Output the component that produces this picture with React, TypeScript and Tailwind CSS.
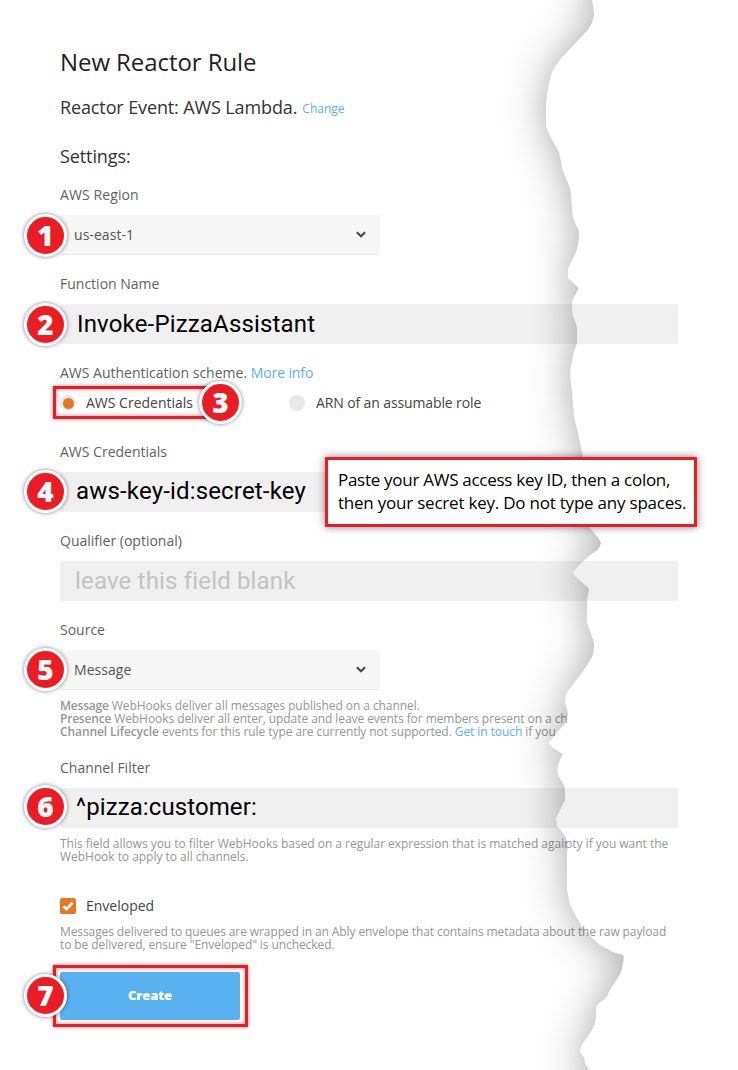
import type { ReactNode } from 'react';

const EDGE =
  'M592 0 C593 6 594 10 594 15 L592 23 C590 27 588 30 585 33 L567 52 C564 55 561 58 559 61 C556 66 553 69 551 75 L548 88 L546 103 L546 127 C548 131 549 134 550.5 137 L559 152 C560 157 561 162 562 167 C564 175 568 182 570.5 190 L573 218 L576.5 226 C578 229 579 231 579 233 L578.7 240 C578 245 577 249 576 252 L568 269 L568 278 L578.7 288 C577 293 573 297 572 303 L572 312 C573 318 576 322 577 328 L577 343 C575 349 573 353 572.7 358 C571 366 570 372 570.3 377 L572.7 400 L574 417 L578 433 L583 457 L589 527 L599 539 L601 543 L599 548 C597 551 593 553 590 555 L580 564 L573 572 C574 575 575 577 577 578 L585 585 C587 587 589 588 589 590 L587 600 L587 622 C588 627 591 632 592 637 C594 641 594 643 594 646 C594 650 593 654 592 657 C589 662 586 667 583 671 L571 687 C568 691 566 693 565.5 697 C565 701 565 704 566 707 C567 710 568 712 568 715 L565 723 L555 735 L549 743 C550 745 551 746 553 748 L562.5 754 L559 762 C558 765 557 769 557.5 772 C558 777 563 782 565 788 L565 800 L556 818 L557 826 L563 833 C565 836 567 839 567 842 L567 888 C567.5 895 569 901 571 907 C574 913 577 918 580 923 C582 927 584 930 587 933 C591 937 595 941 600 945 L613 952 L623.7 955.5 C623.7 961 622.5 967 621 972 C619 976 617 979 615 982 C612 987 609 991 607 996 C604 1000 600 1002 597 1005 L596 1009 L596 1018 C595 1022 594 1025 593 1028 C590 1034 584 1040 581 1047 L580 1052 L584 1057 L585 1063 L589 1070';

function TornEdge() {
  return (
    <svg className="pointer-events-none absolute left-0 top-0" width="738" height="1070" viewBox="0 0 738 1070" aria-hidden="true">
      <defs>
        <clipPath id="sheet">
          <path d={EDGE + ' L0 1070 L0 0 Z'} />
        </clipPath>
        <filter id="soft" filterUnits="userSpaceOnUse" x="300" y="-100" width="640" height="1270" colorInterpolationFilters="sRGB">
          <feGaussianBlur stdDeviation="20" />
        </filter>
      </defs>
      <g clipPath="url(#sheet)">
        <path d={EDGE + ' L585 1170 L940 1170 L940 -100 L588 -100 Z'} fill="#000" fillOpacity="0.34" filter="url(#soft)" />
      </g>
    </svg>
  );
}

function Badge({ n, className = '-left-9 -top-px' }: { n: number; className?: string }) {
  return (
    <span
      className={`absolute z-20 flex size-[43px] items-center justify-center rounded-full border-[3px] border-white bg-[#ed1c24] pb-0.5 font-['Open_Sans',sans-serif] text-[28px] font-extrabold leading-none tracking-normal text-white shadow-[0_0_4px_rgba(0,0,0,0.5)] ${className}`}
    >
      {n}
    </span>
  );
}

function Label({ children, className = 'mt-[19px]' }: { children: ReactNode; className?: string }) {
  return <div className={`h-5 whitespace-nowrap text-sm leading-5 text-[#626262] ${className}`}>{children}</div>;
}

function Select({ value, n, badge }: { value: string; n: number; badge: string }) {
  return (
    <div className="relative mt-2.5 flex h-10 w-80 items-center justify-between rounded-[3px] border-b border-[#e6e6e6] bg-[#f7f7f7] pl-3.5 pr-3.5 text-sm text-[#555]">
      <Badge n={n} className={badge} />
      <span className="pt-px tracking-[0.05px]">{value}</span>
      <svg width="10" height="7" viewBox="0 0 10 7" fill="none" stroke="#4a4a4a" strokeWidth="2.2" aria-hidden="true">
        <path d="M0.9 1.2 L5 5.2 L9.1 1.2" />
      </svg>
    </div>
  );
}

function Field({ children, className }: { children: ReactNode; className: string }) {
  return (
    <div
      className={`relative mt-2.5 h-10 w-[618px] whitespace-nowrap rounded-[2px] bg-[#f0f0f0] font-['Roboto',sans-serif] text-[24px] leading-10 ${className}`}
    >
      {children}
    </div>
  );
}

export default function App() {
  return (
    <main className="relative h-[1070px] w-[738px] overflow-hidden bg-white pl-[60px] pt-[46px] font-['Open_Sans',sans-serif]">
      <h1 className="h-8 text-2xl leading-8 tracking-[-0.07px] text-[#222]">New Reactor Rule</h1>
      <div className="mt-[17px] flex h-6 whitespace-nowrap text-lg leading-6 text-[#333]">
        <span className="tracking-[-0.12px]">Reactor Event: AWS Lambda.</span>
        <a className="ml-[5px] pt-0.5 text-xs font-medium leading-6 text-[#5ab1ef]">Change</a>
      </div>
      <h2 className="mt-[25px] h-6 text-lg leading-6 tracking-[-0.1px] text-[#333]">Settings:</h2>

      <Label className="mt-[17px] tracking-[0.1px]">AWS Region</Label>
      <Select value="us-east-1" n={1} badge="-left-9 -top-px" />

      <Label>Function Name</Label>
      <Field className="pl-[17px] tracking-[0.17px] text-black">
        <Badge n={2} />
        Invoke-PizzaAssistant
      </Field>

      <Label>
        AWS Authentication scheme. <a className="font-medium tracking-[-0.1px] text-[#5ab1ef]">More info</a>
      </Label>
      <div className="relative mt-2.5 flex h-5 items-center whitespace-nowrap text-sm leading-5 text-[#444]">
        <div className="absolute -left-[7px] -top-[7px] h-[33px] w-[167px] border-[3px] border-[#ed1c24] shadow-[0_0_4px_rgba(0,0,0,0.45),inset_0_0_4px_rgba(0,0,0,0.45)]" />
        <Badge n={3} className="left-[139px] -top-[12px]" />
        <span className="flex size-4 items-center justify-center rounded-full bg-[#e8e8e8]">
          <span className="size-[11px] rounded-full bg-[#e87722]" />
        </span>
        <span className="ml-2.5 w-[203px] pb-px">AWS Credentials</span>
        <span className="size-4 rounded-full bg-[#e8e8e8]" />
        <span className="ml-[11px] pb-px tracking-[-0.12px]">ARN of an assumable role</span>
      </div>

      <Label className="mt-[29px]">AWS Credentials</Label>
      <Field className="pl-4 tracking-[0.17px] text-black">
        <Badge n={4} className="-left-9 -top-[2px]" />
        <span className="relative -top-px">aws-key-id:secret-key</span>
      </Field>

      <Label>Qualifier (optional)</Label>
      <Field className="pl-[15px] tracking-[0.17px] text-[#c3c3c3]">leave this field blank</Field>

      <Label>Source</Label>
      <Select value="Message" n={5} badge="-left-9 -top-[2px]" />
      <div className="mt-[9px] h-10 w-[508px] overflow-hidden whitespace-nowrap text-xs leading-[13px] tracking-[-0.07px] text-[#969696]">
        <p>
          <b className="font-semibold tracking-[-0.2px]">Message</b> WebHooks deliver all messages published on a channel.
        </p>
        <p>
          <b className="font-semibold tracking-[-0.2px]">Presence</b> WebHooks deliver all enter, update and leave events for members present on a channel
        </p>
        <p>
          <b className="font-semibold tracking-[-0.1px]">Channel Lifecycle</b> events for this rule type are currently not supported.{' '}
          <a className="font-medium text-[#5ab1ef]">Get in touch</a> if you
        </p>
      </div>

      <Label>Channel Filter</Label>
      <Field className="pl-4 tracking-[0.1px] text-black">
        <Badge n={6} className="-left-9 -top-[3px]" />
        <span className="relative -top-px">^pizza:customer:</span>
      </Field>
      <div className="mt-[9px] whitespace-nowrap text-xs leading-[13px] tracking-[-0.03px] text-[#969696]">
        <p className="flex h-[13px]">
          <span className="h-4 w-[507px] overflow-hidden">
            This field allows you to filter WebHooks based on a regular expression that is matched again
          </span>
          <span className="h-4 overflow-hidden">
            <span className="-ml-0.5">pty if you want the</span>
          </span>
        </p>
        <p>WebHook to apply to all channels.</p>
      </div>

      <div className="mt-[33px] flex h-5 items-center text-sm leading-5 text-[#444]">
        <span className="flex size-4 items-center justify-center rounded-[2px] bg-[#e87722]">
          <svg width="12" height="12" viewBox="0 0 12 12" fill="none" stroke="#fff" strokeWidth="2.8" aria-hidden="true">
            <path d="M1.4 6.2 L4.5 9 L10.6 2.6" />
          </svg>
        </span>
        <span className="ml-2.5 pb-px">Enveloped</span>
      </div>
      <div className="mt-[9px] whitespace-nowrap text-xs leading-[13px] text-[#969696]">
        <p className="tracking-[-0.1px]">
          Messages delivered to queues are wrapped in an Ably envelope that contains metadata about the raw payload
        </p>
        <p className="tracking-[-0.085px]">to be delivered, ensure "Enveloped" is unchecked.</p>
      </div>

      <div className="relative mt-[21px] h-12 w-[180px]">
        <div className="absolute -left-[7px] -top-[7px] h-[62px] w-[195px] border-[3px] border-[#ed1c24] shadow-[0_0_4px_rgba(0,0,0,0.45),inset_0_0_4px_rgba(0,0,0,0.45)]" />
        <button className="relative h-12 w-[180px] rounded-[2px] bg-[#5ab1ef] text-[13px] font-extrabold tracking-[-0.1px] text-white">
          Create
        </button>
        <Badge n={7} className="-left-9 top-[2px]" />
      </div>

      <TornEdge />

      <aside className="absolute left-[325px] top-[457px] z-10 h-[70px] w-[372px] whitespace-nowrap border-[3px] border-[#ed1c24] bg-white pl-[10px] pt-[8px] text-[17px] leading-[23px] text-black shadow-[0_0_8px_rgba(0,0,0,0.5)]">
        <p className="tracking-[-0.28px]">Paste your AWS access key ID, then a colon,</p>
        <p className="tracking-[-0.22px]">then your secret key. Do not type any spaces.</p>
      </aside>
    </main>
  );
}
